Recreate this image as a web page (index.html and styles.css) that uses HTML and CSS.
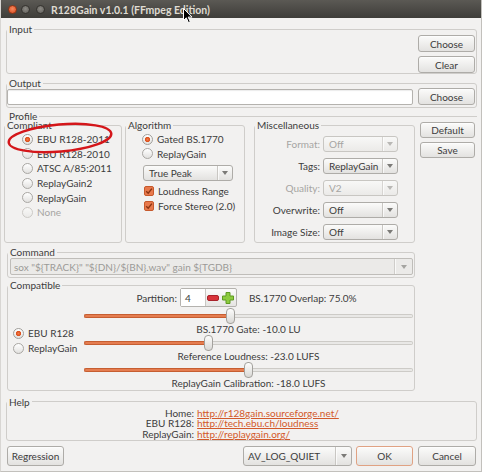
FILE: index.html
```html
<!DOCTYPE html>
<html>
<head>
<meta charset="utf-8">
<title>R128Gain</title>
<link rel="stylesheet" href="styles.css">
</head>
<body>
<div class="window">
  <div class="titlebar">
    <div class="wbtns">
      <span class="wb wb-close"></span>
      <span class="wb wb-min"></span>
      <span class="wb wb-max"></span>
    </div>
    <div class="title">R128Gain v1.0.1 (FFmpeg Edition)</div>
    <svg class="cursor" width="10" height="16" viewBox="0 0 10 16"><path d="M0.5 0.5 L0.5 12.5 L3.3 9.8 L5.4 14.6 L7.3 13.8 L5.2 9.1 L9 9.1 Z" fill="#000" stroke="#fff" stroke-width="1" stroke-linejoin="round"/></svg>
  </div>
  <div class="content">
    <fieldset class="frame f-input">
      <legend>Input</legend>
      <div class="row-input">
        <div class="fill"></div>
        <div class="btncol">
          <div class="btn h17">Choose</div>
          <div class="btn h17">Clear</div>
        </div>
      </div>
    </fieldset>

    <fieldset class="frame f-output">
      <legend>Output</legend>
      <div class="row-output">
        <div class="entry fill"></div>
        <div class="btn h17 btn-up">Choose</div>
      </div>
    </fieldset>

    <fieldset class="frame f-profile">
      <legend>Profile</legend>
      <div class="profile-top">
        <fieldset class="frame f-compliant">
          <legend>Compliant</legend>
          <div class="col-body compliant-body">
            <div class="opt"><span class="radio on"></span>EBU R128-2011</div>
            <div class="opt"><span class="radio"></span>EBU R128-2010</div>
            <div class="opt"><span class="radio"></span>ATSC A/85:2011</div>
            <div class="opt"><span class="radio"></span>ReplayGain2</div>
            <div class="opt"><span class="radio"></span>ReplayGain</div>
            <div class="opt disabled"><span class="radio dis"></span>None</div>
          </div>
          <svg class="annot" width="110" height="36" viewBox="0 0 110 36"><ellipse cx="55" cy="17" rx="51.5" ry="13.5" transform="rotate(-5 55 17)" fill="none" stroke="#d4161a" stroke-width="2.4"/></svg>
        </fieldset>

        <fieldset class="frame f-algorithm">
          <legend>Algorithm</legend>
          <div class="col-body algorithm-body">
            <div class="opt"><span class="radio on"></span>Gated BS.1770</div>
            <div class="opt"><span class="radio"></span>ReplayGain</div>
            <div class="combo combo-tp"><span class="combo-text">True Peak</span><span class="combo-arrow"><span class="tri"></span></span></div>
            <div class="opt opt-cb"><svg class="check" width="10" height="10" viewBox="0 0 10 10"><rect x="0.5" y="0.5" width="9" height="9" rx="1.5" fill="#e8794c" stroke="#c6592c"/><path d="M2.2 5.2 L4.2 7.2 L7.9 2.6" fill="none" stroke="#8a3412" stroke-width="1.4"/></svg>Loudness Range</div>
            <div class="opt opt-cb"><svg class="check" width="10" height="10" viewBox="0 0 10 10"><rect x="0.5" y="0.5" width="9" height="9" rx="1.5" fill="#e8794c" stroke="#c6592c"/><path d="M2.2 5.2 L4.2 7.2 L7.9 2.6" fill="none" stroke="#8a3412" stroke-width="1.4"/></svg>Force Stereo (2.0)</div>
          </div>
        </fieldset>

        <fieldset class="frame f-misc">
          <legend>Miscellaneous</legend>
          <div class="col-body misc-body">
            <span class="mlabel disabled-text">Format:</span>
            <div class="combo combo-dis"><span class="combo-text">Off</span><span class="combo-arrow"><span class="tri"></span></span></div>
            <span class="mlabel">Tags:</span>
            <div class="combo"><span class="combo-text">ReplayGain</span><span class="combo-arrow"><span class="tri"></span></span></div>
            <span class="mlabel disabled-text">Quality:</span>
            <div class="combo combo-dis"><span class="combo-text">V2</span><span class="combo-arrow"><span class="tri"></span></span></div>
            <span class="mlabel">Overwrite:</span>
            <div class="combo"><span class="combo-text">Off</span><span class="combo-arrow"><span class="tri"></span></span></div>
            <span class="mlabel">Image Size:</span>
            <div class="combo"><span class="combo-text">Off</span><span class="combo-arrow"><span class="tri"></span></span></div>
          </div>
        </fieldset>

        <div class="side-btns">
          <div class="btn h16">Default</div>
          <div class="btn h16">Save</div>
        </div>
      </div>

      <fieldset class="frame f-command">
        <legend>Command</legend>
        <div class="cmd-entry">
          <span class="cmd-text">sox "${TRACK}" "${DN}/${BN}.wav" gain ${TGDB}</span>
          <span class="combo-arrow cmd-arrow"><span class="tri"></span></span>
        </div>
      </fieldset>

      <fieldset class="frame f-compat">
        <legend>Compatible</legend>
        <div class="compat-body">
          <div class="compat-radios">
            <div class="opt"><span class="radio on"></span>EBU R128</div>
            <div class="opt"><span class="radio"></span>ReplayGain</div>
          </div>
          <div class="compat-main">
            <div class="partition-row">
              <span>Partition:</span>
              <div class="spin">
                <span class="spin-entry">4</span>
                <span class="spin-btn"><svg width="12" height="6" viewBox="0 0 12 6"><rect x="0.5" y="0.5" width="11" height="5" rx="1.5" fill="#d8343a" stroke="#a8222a"/></svg></span>
                <span class="spin-btn"><svg width="12" height="12" viewBox="0 0 12 12"><path d="M4 0.5 H8 V4 H11.5 V8 H8 V11.5 H4 V8 H0.5 V4 H4 Z" fill="#8ccb3e" stroke="#5f9a22"/></svg></span>
              </div>
              <span class="overlap">BS.1770 Overlap: 75.0%</span>
            </div>
            <div class="slider"><span class="trk-fill" style="width:141.5px"></span><span class="handle"></span><span class="trk-rest"></span></div>
            <div class="slabel">BS.1770 Gate: -10.0 LU</div>
            <div class="slider"><span class="trk-fill" style="width:119.5px"></span><span class="handle"></span><span class="trk-rest"></span></div>
            <div class="slabel">Reference Loudness: -23.0 LUFS</div>
            <div class="slider"><span class="trk-fill" style="width:159.5px"></span><span class="handle"></span><span class="trk-rest"></span></div>
            <div class="slabel">ReplayGain Calibration: -18.0 LUFS</div>
          </div>
        </div>
      </fieldset>
    </fieldset>

    <fieldset class="frame f-help">
      <legend>Help</legend>
      <div class="help-grid">
        <span class="hl">Home:</span><a class="link">http://r128gain.sourceforge.net/</a>
        <span class="hl">EBU R128:</span><a class="link">http://tech.ebu.ch/loudness</a>
        <span class="hl">ReplayGain:</span><a class="link">http://replaygain.org/</a>
      </div>
    </fieldset>

    <div class="bottom-row">
      <div class="btn h20 btn-reg">Regression</div>
      <div class="combo combo-log"><span class="combo-text">AV_LOG_QUIET</span><span class="combo-arrow"><span class="tri"></span></span></div>
      <div class="btn h20 btn-ok">OK</div>
      <div class="btn h20 btn-cancel">Cancel</div>
    </div>
  </div>
</div>
</body>
</html>
```

FILE: styles.css
```css
html, body {
  margin: 0;
  padding: 0;
}
body {
  background: #f2f1f0;
  font-family: "Lato", "Open Sans", sans-serif;
  font-size: 10px;
  color: #3c3c3c;
}
.window {
  width: 482px;
  height: 472px;
  box-sizing: border-box;
  border-right: 1px solid #c2c0bc;
  border-bottom: 1px solid #c2c0bc;
  border-left: 1px solid #d8d6d3;
  overflow: hidden;
  background: #f2f1f0;
}

/* title bar */
.titlebar {
  position: relative;
  height: 18px;
  margin: 0 -1px;
  background: linear-gradient(#5b5954, #3e3d39);
  display: flex;
  align-items: center;
}
.wbtns {
  width: 51px;
  box-sizing: border-box;
  padding-left: 8px;
  display: flex;
  gap: 3px;
}
.wb {
  width: 9px;
  height: 9px;
  border-radius: 50%;
  box-sizing: border-box;
}
.wb-close {
  background: radial-gradient(circle at 50% 40%, #f58a5f, #d9461b);
  border: 1px solid #8e3415;
}
.wb-min, .wb-max {
  background: radial-gradient(circle at 50% 40%, #8c8a85, #5e5c57);
  border: 1px solid #35332f;
}
.wb-min { margin-left: 1px; }
.wb-max { margin-left: 3px; }
.title {
  font-weight: bold;
  font-size: 10.5px;
  color: #dfdbd2;
  padding-top: 1px;
}
.cursor {
  position: absolute;
  left: 183px;
  top: 8px;
}

/* content */
.content {
  padding: 0 4px 0 5px;
}
.frame {
  margin: 0;
  padding: 0;
  border: 1px solid #cfcdca;
  border-radius: 3px;
  min-width: 0;
  position: relative;
}
.frame > legend {
  padding: 0 2px;
  line-height: 12px;
  font-size: 10px;
  color: #3c3c3c;
}

.btn {
  box-sizing: border-box;
  border: 1px solid #aeaca8;
  border-radius: 3px;
  background: linear-gradient(#fbfbfa, #e3e2e0);
  box-shadow: 0 1px 0 rgba(255,255,255,0.6) inset;
  display: flex;
  align-items: center;
  justify-content: center;
  color: #3c3c3c;
}
.h16 { height: 16px; }
.h17 { height: 17px; }
.h20 { height: 20px; }

.fill { flex: 1; }

.f-input { margin-top: 5px; }
.row-input {
  display: flex;
  height: 38px;
}
.btncol {
  display: flex;
  flex-direction: column;
  gap: 4px;
  width: 57px;
  padding-right: 1px;
}

.f-output { margin-top: 3px; }
.row-output {
  display: flex;
  align-items: flex-start;
  gap: 5px;
  padding-bottom: 2px;
  padding-right: 1px;
}
.entry {
  height: 16px;
  box-sizing: border-box;
  border: 1px solid #b4b2ae;
  border-radius: 2px;
  background: #fff;
  box-shadow: inset 0 1px 1px rgba(0,0,0,0.08);
}
.btn-up {
  width: 57px;
  margin-top: -1px;
}

/* profile */
.f-profile {
  margin-top: 3.5px;
  margin-left: -3px;
  border: 0;
  border-top: 1px solid #cfcdca;
  border-radius: 0;
}
.f-profile > legend {
  padding: 0 2px 0 6px;
  line-height: 9px;
}
.profile-top {
  display: flex;
  margin-top: -1.5px;
}
.col-body {
  height: 111px;
  box-sizing: border-box;
}
.f-compliant {
  margin-left: 1px;
  width: 118px;
  box-sizing: border-box;
}
.compliant-body {
  padding: 1px 0 0 17px;
}
.opt {
  height: 14.6px;
  display: flex;
  align-items: center;
  white-space: nowrap;
}
.disabled { color: #a6a5a2; }
.disabled-text { color: #a6a5a2; }
.radio {
  width: 11px;
  height: 11px;
  flex: none;
  box-sizing: border-box;
  border-radius: 50%;
  border: 1px solid #a9a7a3;
  background: linear-gradient(#ffffff, #e2e1df);
  margin-right: 4px;
}
.radio.on {
  background: radial-gradient(circle at 50% 50%, #f07c4c 0, #dc4f1a 2.2px, rgba(220,79,26,0) 3px), linear-gradient(#ffffff, #e2e1df);
  border-color: #a09e9a;
}
.radio.dis {
  border-color: #cccac6;
  background: linear-gradient(#f8f8f7, #ebeae8);
}
.annot {
  position: absolute;
  left: -0.5px;
  top: -10px;
}

.f-algorithm {
  margin-left: 3px;
  width: 120px;
  box-sizing: border-box;
}
.algorithm-body {
  padding: 1px 0 0 16px;
}
.combo {
  box-sizing: border-box;
  height: 16px;
  border: 1px solid #aeaca8;
  border-radius: 3px;
  background: linear-gradient(#fbfbfa, #e3e2e0);
  display: flex;
  align-items: center;
  color: #3c3c3c;
}
.combo-text {
  flex: 1;
  padding-left: 5px;
  white-space: nowrap;
}
.combo-arrow {
  width: 14px;
  align-self: stretch;
  border-left: 1px solid #c9c7c3;
  display: flex;
  align-items: center;
  justify-content: center;
  box-shadow: inset 1px 0 0 rgba(255,255,255,0.7);
}
.tri {
  width: 0;
  height: 0;
  border-left: 3px solid transparent;
  border-right: 3px solid transparent;
  border-top: 4px solid #7b7a77;
}
.combo-tp {
  width: 90px;
  margin: 3.8px 0 2.7px 1px;
}
.opt-cb { padding-left: 2px; }
.check {
  flex: none;
  margin-right: 4px;
}

.f-misc {
  margin-left: 9px;
  width: 161px;
  box-sizing: border-box;
}
.misc-body {
  padding-top: 4px;
  display: grid;
  grid-template-columns: 65px 75px;
  grid-auto-rows: 17px;
  column-gap: 3px;
  row-gap: 5px;
  align-items: center;
}
.mlabel {
  text-align: right;
  white-space: nowrap;
}
.combo-dis {
  color: #a6a5a2;
  border-color: #c8c6c2;
  background: linear-gradient(#f8f8f7, #ebeae8);
}
.combo-dis .tri { border-top-color: #b9b8b5; }
.combo-dis .combo-arrow { border-left-color: #d7d5d2; }

.side-btns {
  margin-left: 5px;
  width: 55px;
  padding-top: 3px;
  display: flex;
  flex-direction: column;
  gap: 4px;
}

/* command */
.f-command {
  margin: 3px 0 0 4px;
  width: 408px;
  box-sizing: border-box;
}
.cmd-entry {
  margin: 0 0 2px 2px;
  width: 403px;
  height: 17px;
  box-sizing: border-box;
  border: 1px solid #bfbdb9;
  border-radius: 2px;
  background: #ebeae8;
  display: flex;
  align-items: center;
  color: #9b9a97;
}
.cmd-text {
  flex: 1;
  padding-left: 3px;
  white-space: nowrap;
}
.cmd-arrow {
  width: 17px;
  border-left-color: #cfcdca;
}
.cmd-arrow .tri { border-top-color: #a5a4a1; }

/* compatible */
.f-compat {
  margin: 1px 0 0 4px;
  width: 408px;
  box-sizing: border-box;
}
.compat-body {
  display: flex;
  margin-top: -3px;
  padding-bottom: 1px;
}
.compat-radios {
  width: 76px;
  padding: 37.5px 0 0 5px;
  box-sizing: border-box;
  height: 100px;
}
.compat-radios .opt { height: 15px; }
.compat-main {
  flex: 1;
  padding-right: 1px;
}
.partition-row {
  height: 19px;
  margin-bottom: 1px;
  display: flex;
  align-items: center;
  justify-content: center;
  padding-right: 4px;
}
.spin {
  margin-left: 3px;
  height: 19px;
  box-sizing: border-box;
  border: 1px solid #b4b2ae;
  border-radius: 2px;
  display: flex;
  background: linear-gradient(#fbfbfa, #e6e5e3);
}
.spin-entry {
  width: 25px;
  background: #fff;
  padding-left: 4px;
  box-sizing: border-box;
  display: flex;
  align-items: center;
  border-right: 1px solid #c9c7c3;
}
.spin-btn {
  width: 15px;
  display: flex;
  align-items: center;
  justify-content: center;
}
.overlap {
  margin-left: 12px;
}
.slider {
  height: 16px;
  display: flex;
  align-items: center;
}
.trk-fill {
  height: 4px;
  box-sizing: border-box;
  border: 1px solid #c65e31;
  border-right: 0;
  border-radius: 2px 0 0 2px;
  background: #e57d50;
  flex: none;
}
.handle {
  width: 9px;
  height: 16px;
  flex: none;
  box-sizing: border-box;
  border: 1px solid #a3a19d;
  border-radius: 4px;
  background: linear-gradient(#fdfdfc, #d9d8d5);
}
.trk-rest {
  flex: 1;
  height: 4px;
  box-sizing: border-box;
  border: 1px solid #cdcbc7;
  border-left: 0;
  border-radius: 0 2px 2px 0;
  background: #e9e8e6;
}
.slabel {
  height: 11px;
  line-height: 11px;
  text-align: center;
  white-space: nowrap;
}

/* help */
.f-help {
  margin-top: 4.5px;
}
.help-grid {
  display: grid;
  grid-template-columns: auto auto;
  justify-content: center;
  column-gap: 3px;
  line-height: 10.8px;
  padding-right: 2px;
}
.hl { text-align: right; }
.link {
  color: #d2592b;
  text-decoration: underline;
}

/* bottom */
.bottom-row {
  display: flex;
  margin-top: 5px;
}
.btn-reg {
  width: 57px;
  margin-left: 1px;
}
.combo-log {
  height: 20px;
  width: 109px;
  margin-left: auto;
}
.combo-log .combo-text { padding-left: 4px; }
.combo-log .combo-arrow { width: 15px; }
.btn-ok {
  width: 57px;
  margin-left: 4px;
  border-color: #e0a283;
}
.btn-cancel {
  width: 58px;
  margin-left: 5px;
  margin-right: 1px;
}
```
